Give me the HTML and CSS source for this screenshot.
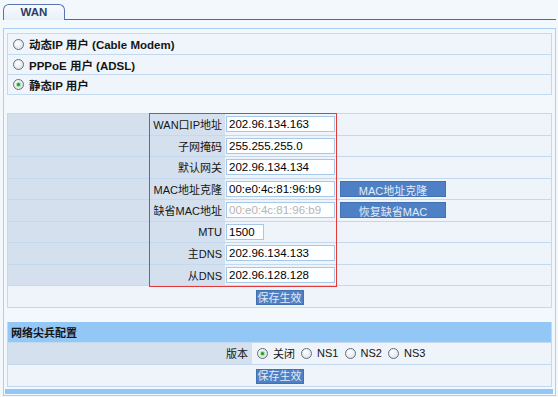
FILE: index.html
```html
<!DOCTYPE html>
<html>
<head>
<meta charset="utf-8">
<link rel="stylesheet" href="styles.css">
</head>
<body>
<div class="tabs">
  <div class="tab">WAN</div>
  <div class="tabline"></div>
</div>
<div class="panel">
  <div class="modes">
    <div class="mode"><span class="radio"></span><span>动态IP 用户 (Cable Modem)</span></div>
    <div class="mode"><span class="radio"></span><span>PPPoE 用户 (ADSL)</span></div>
    <div class="mode"><span class="radio on"></span><span>静态IP 用户</span></div>
  </div>

  <div class="cfg">
    <table class="grid">
      <tr><td class="lbl">WAN口IP地址</td><td class="val"><input class="field" value="202.96.134.163"></td><td class="act"></td></tr>
      <tr><td class="lbl">子网掩码</td><td class="val"><input class="field" value="255.255.255.0"></td><td class="act"></td></tr>
      <tr><td class="lbl">默认网关</td><td class="val"><input class="field" value="202.96.134.134"></td><td class="act"></td></tr>
      <tr><td class="lbl">MAC地址克隆</td><td class="val"><input class="field" value="00:e0:4c:81:96:b9"></td><td class="act"><button class="btn wide">MAC地址克隆</button></td></tr>
      <tr><td class="lbl">缺省MAC地址</td><td class="val"><input class="field off" value="00:e0:4c:81:96:b9" disabled></td><td class="act"><button class="btn wide">恢复缺省MAC</button></td></tr>
      <tr><td class="lbl">MTU</td><td class="val"><input class="field short" value="1500"></td><td class="act"></td></tr>
      <tr><td class="lbl">主DNS</td><td class="val"><input class="field" value="202.96.134.133"></td><td class="act"></td></tr>
      <tr><td class="lbl">从DNS</td><td class="val"><input class="field" value="202.96.128.128"></td><td class="act"></td></tr>
      <tr class="save"><td colspan="3"><button class="btn small">保存生效</button></td></tr>
    </table>
    <div class="mark"></div>
  </div>

  <table class="grid sect">
    <tr class="head"><td colspan="2">网络尖兵配置</td></tr>
    <tr>
      <td class="lbl2">版本</td>
      <td class="opts">
        <span class="radio on"></span><span class="opt">关闭</span>
        <span class="radio"></span><span class="opt">NS1</span>
        <span class="radio"></span><span class="opt">NS2</span>
        <span class="radio"></span><span class="opt">NS3</span>
      </td>
    </tr>
    <tr class="save"><td colspan="2"><button class="btn small">保存生效</button></td></tr>
  </table>
  <div class="foot"></div>
</div>
</body>
</html>
```
FILE: styles.css
```css
* { box-sizing: border-box; }
body {
  margin: 0;
  width: 558px;
  height: 397px;
  overflow: hidden;
  background: #f3f8fd;
  font-family: "Liberation Sans", "Noto Sans CJK SC", sans-serif;
  font-size: 11px;
  color: #151515;
}
.tabs { display: flex; align-items: flex-end; height: 20px; }
.tab {
  margin-left: 3px;
  width: 62px;
  height: 16px;
  border: 1px solid #5a72b4;
  border-bottom: none;
  border-radius: 6px 6px 0 0;
  background: linear-gradient(#f8fbfe, #e7eff8);
  font-weight: bold;
  font-size: 11.5px;
  color: #2c3e66;
  text-align: center;
  line-height: 15px;
}
.tabline { flex: 1; margin-right: 2px; border-bottom: 1px solid #4a64c0; }
.panel {
  margin: 8px 2px 0 3px;
  height: 368px;
  border: 1px solid #a8cff4;
  padding: 4px 3px 1px 3px;
}
.modes { border: 1px solid #c3d9ef; background: #eff5fb; }
.mode {
  height: 20px;
  display: flex;
  align-items: center;
  gap: 5px;
  padding-left: 5px;
  font-weight: bold;
  font-size: 11.5px;
}
.mode + .mode { border-top: 1px solid #c3d9ef; }

.radio {
  display: inline-block;
  flex: none;
  position: relative;
  width: 11px;
  height: 11px;
  border-radius: 50%;
  border: 1px solid #5f6f80;
  background: radial-gradient(circle at 40% 35%, #ffffff, #d6dde6);
  vertical-align: middle;
}
.radio.on::after {
  content: "";
  position: absolute;
  left: 3px;
  top: 3px;
  width: 3px;
  height: 3px;
  border-radius: 50%;
  background: #1f9c1f;
  box-shadow: 0 0 1px 1px #9ad89a;
}

.cfg { position: relative; margin-top: 18px; }
.grid {
  width: 100%;
  border-collapse: separate;
  border-spacing: 0;
  border: 1px solid #c3d9ef;
  border-top: none;
}
.grid td {
  height: 21.5px;
  padding: 0;
  border-top: 1px solid #c3d9ef;
  background: #eef4fa;
  vertical-align: middle;
}
.grid td.lbl {
  width: 217px;
  text-align: right;
  padding-right: 3px;
  background: #d4e0ed;
}
.grid td.val { width: 113px; padding-left: 1px; }
.grid td.act { padding-left: 2px; }
.field {
  display: block;
  width: 109px;
  height: 16px;
  margin: 0;
  padding: 0 2px;
  border: 1px solid #a6c8e6;
  background: #fdfeff;
  font-family: "Liberation Sans", sans-serif;
  font-size: 11.5px;
  color: #000;
}
.field.short { width: 38px; }
.field.off { color: #b5b5b5; }
.btn {
  display: inline-block;
  margin: 0;
  padding: 0;
  border: 1px solid #4272b4;
  background: #4d80c4;
  color: #e3ebf8;
  font-family: "Liberation Sans", "Noto Sans CJK SC", sans-serif;
  font-size: 11px;
  vertical-align: middle;
}
.btn.wide { width: 106px; height: 16px; }
.btn.small { display: block; margin: 0 auto; width: 48px; height: 15px; line-height: 12px; }
.grid tr.save td { height: 22px; text-align: center; vertical-align: top; padding-top: 4px; }

.mark {
  position: absolute;
  left: 142px;
  top: 0;
  width: 188px;
  height: 174px;
  border: 1px solid #e23a3a;
  pointer-events: none;
}

.sect { margin-top: 14px; }
.sect tr.head td {
  height: 20px;
  border-top: none;
  background: #93c7f6;
  font-weight: bold;
  padding-left: 3px;
}
.grid td.lbl2 {
  width: 244px;
  text-align: right;
  padding-right: 4px;
  background: #d4e0ed;
}
.grid td.opts { padding-left: 5px; }
.opt { margin: 0 3px 0 5px; vertical-align: middle; }
.foot {
  height: 5px;
  margin: 2px -1px 0 -2px;
  background: #93c7f6;
}
```
